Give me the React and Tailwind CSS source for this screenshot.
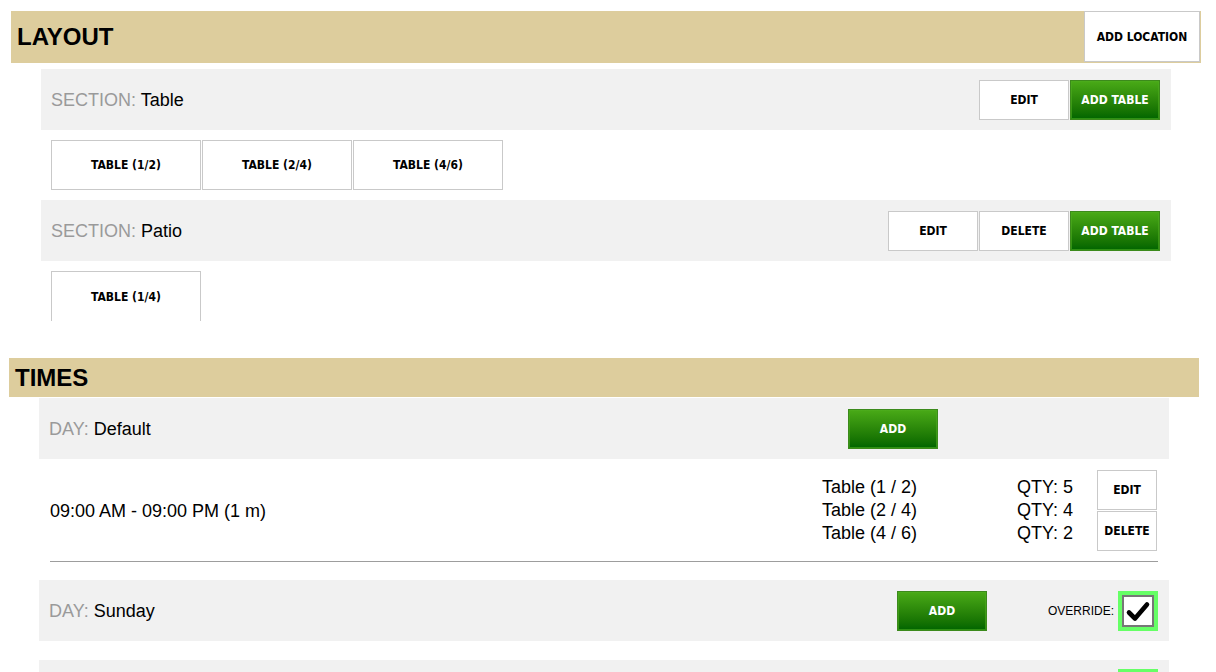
import React from "react";

const btnFont = "font-['DejaVu_Sans_Condensed','DejaVu_Sans',Tahoma,sans-serif] font-bold text-[12px] leading-none";

function WhiteBtn({ children, w = "w-[90px]", h = "h-[40px]" }) {
  return (
    <div className={`${w} ${h} shrink-0 bg-white border border-[#c9c9c9] flex items-center justify-center text-black ${btnFont}`}>
      {children}
    </div>
  );
}

function GreenBtn({ children }) {
  return (
    <div className={`w-[90px] h-[40px] shrink-0 border border-[#3c8a1c] bg-gradient-to-b from-[#49aa17] to-[#006500] flex items-center justify-center text-white ${btnFont}`}>
      <div className="w-full h-full border border-[#4fae20]/60 flex items-center justify-center">{children}</div>
    </div>
  );
}

function TableBtn({ children, open }) {
  return (
    <div className={`w-[150px] h-[50px] shrink-0 bg-white border border-[#c9c9c9] ${open ? "border-b-0" : ""} flex items-center justify-center text-black ${btnFont}`}>
      {children}
    </div>
  );
}

function Label({ k, v }) {
  return (
    <div className="text-[18px] leading-none">
      <span className="text-[#9a9a9a]">{k}: </span>
      <span className="text-black">{v}</span>
    </div>
  );
}

function Check() {
  return (
    <div className="w-[40px] h-[40px] bg-[#66ff66] p-[4px] shrink-0">
      <div className="w-full h-full bg-white border-2 border-[#777] flex items-center justify-center">
        <svg width="26" height="24" viewBox="0 0 26 24">
          <path d="M4 13.5 L10 19.5 L22 5.5" fill="none" stroke="#000" strokeWidth="4.6" strokeLinecap="round" strokeLinejoin="round" />
        </svg>
      </div>
    </div>
  );
}

export default function App() {
  return (
    <div className="w-[1216px] h-[672px] overflow-hidden bg-white font-['Liberation_Sans',Arial,sans-serif] text-black">
      <div className="pt-[11px]">
        {/* LAYOUT header */}
        <div className="ml-[11px] w-[1190px] h-[52px] bg-[#ddcd9d] flex items-start justify-between">
          <div className="pl-[6px] h-full flex items-center text-[24px] font-bold leading-none">LAYOUT</div>
          <div className="mr-[1px]">
            <WhiteBtn w="w-[116px]" h="h-[51px]">ADD LOCATION</WhiteBtn>
          </div>
        </div>

        {/* Section Table */}
        <div className="mt-[6px] ml-[41px] w-[1130px] h-[61px] bg-[#f1f1f1] flex items-center pl-[10px] pr-[11px]">
          <div className="flex-1"><Label k="SECTION" v="Table" /></div>
          <div className="flex gap-[1px]">
            <WhiteBtn>EDIT</WhiteBtn>
            <GreenBtn>ADD TABLE</GreenBtn>
          </div>
        </div>
        <div className="mt-[10px] ml-[51px] flex gap-[1px]">
          <TableBtn>TABLE (1/2)</TableBtn>
          <TableBtn>TABLE (2/4)</TableBtn>
          <TableBtn>TABLE (4/6)</TableBtn>
        </div>

        {/* Section Patio */}
        <div className="mt-[10px] ml-[41px] w-[1130px] h-[61px] bg-[#f1f1f1] flex items-center pl-[10px] pr-[11px]">
          <div className="flex-1"><Label k="SECTION" v="Patio" /></div>
          <div className="flex gap-[1px]">
            <WhiteBtn>EDIT</WhiteBtn>
            <WhiteBtn>DELETE</WhiteBtn>
            <GreenBtn>ADD TABLE</GreenBtn>
          </div>
        </div>
        <div className="mt-[10px] ml-[51px] flex gap-[1px]">
          <TableBtn open>TABLE (1/4)</TableBtn>
        </div>

        {/* TIMES header */}
        <div className="mt-[37px] ml-[9px] w-[1190px] h-[39px] bg-[#ddcd9d] flex items-center pl-[6px] text-[24px] font-bold leading-none">
          TIMES
        </div>

        {/* Day Default */}
        <div className="mt-[1px] ml-[39px] w-[1130px] h-[61px] bg-[#f1f1f1] flex items-center pl-[10px] pr-[11px]">
          <div className="flex-1"><Label k="DAY" v="Default" /></div>
          <GreenBtn>ADD</GreenBtn>
          <div className="w-[220px]" />
        </div>

        {/* Time row */}
        <div className="ml-[39px] w-[1130px] px-[11px]">
          <div className="pt-[11px] pb-[10px] border-b border-[#9d9d9d] flex items-center">
            <div className="flex-1 text-[18px] leading-none">09:00 AM - 09:00 PM (1 m)</div>
            <div className="w-[195px] text-[18px] leading-[23px]">
              <div>Table (1 / 2)</div>
              <div>Table (2 / 4)</div>
              <div>Table (4 / 6)</div>
            </div>
            <div className="w-[80px] text-[18px] leading-[23px]">
              <div>QTY: 5</div>
              <div>QTY: 4</div>
              <div>QTY: 2</div>
            </div>
            <div className="flex flex-col gap-[1px] mr-[1px]">
              <WhiteBtn w="w-[60px]">EDIT</WhiteBtn>
              <WhiteBtn w="w-[60px]">DELETE</WhiteBtn>
            </div>
          </div>
        </div>

        {/* Day Sunday */}
        <div className="mt-[18px] ml-[39px] w-[1130px] h-[61px] bg-[#f1f1f1] flex items-center pl-[10px] pr-[11px]">
          <div className="flex-1"><Label k="DAY" v="Sunday" /></div>
          <GreenBtn>ADD</GreenBtn>
          <div className="w-[171px] flex items-center justify-end gap-[4px]">
            <span className="text-[12px] leading-none">OVERRIDE:</span>
            <Check />
          </div>
        </div>

        {/* Next day row (only its top edge is visible) */}
        <div className="mt-[19px] ml-[39px] w-[1130px] h-[61px] bg-[#f1f1f1] flex items-start justify-end pt-[9px] pr-[11px]">
          <Check />
        </div>
      </div>
    </div>
  );
}
